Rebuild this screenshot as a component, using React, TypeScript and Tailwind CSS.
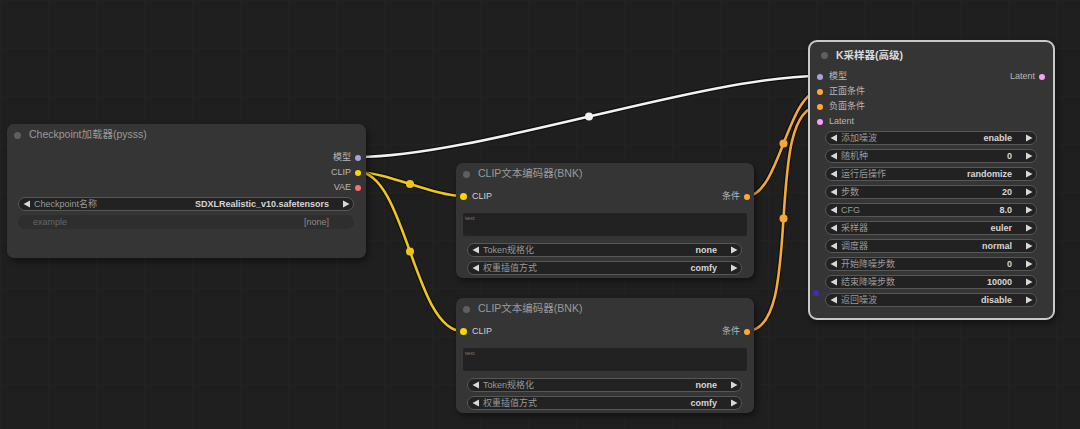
import React from "react";

const FONT = { fontFamily: '"Liberation Sans", Arial, "Noto Sans CJK SC", sans-serif' };

function Arrow({ dir }: { dir: "l" | "r" }) {
  return (
    <svg width="8" height="8" viewBox="0 0 8 8" className="shrink-0">
      {dir === "l" ? <polygon points="7,0.5 7,7.5 0.5,4" fill="#d8d8d8" /> : <polygon points="1,0.5 1,7.5 7.5,4" fill="#d8d8d8" />}
    </svg>
  );
}

function Combo({ label, value, className = "" }: { label: string; value: string; className?: string }) {
  return (
    <div
      className={`h-[14px] rounded-full bg-[#222222] border border-[#575757] flex items-center pl-[4px] pr-[3px] text-[9px] leading-none ${className}`}
    >
      <Arrow dir="l" />
      <span className="ml-[3px] text-[#999999] whitespace-nowrap">{label}</span>
      <span className="ml-auto text-[#d6d6d6] font-bold whitespace-nowrap">{value}</span>
      <span className="ml-[13px] flex"><Arrow dir="r" /></span>
    </div>
  );
}

function Dot({ color, size = 6 }: { color: string; size?: number }) {
  return <span className="rounded-full shrink-0 inline-block" style={{ width: size, height: size, background: color }} />;
}

function OutRow({ label, color, pr }: { label: string; color: string; pr: string }) {
  return (
    <div className={`h-[15px] flex items-center justify-end gap-[4px] text-[9px] text-[#b5b5b5] ${pr}`}>
      <span>{label}</span>
      <Dot color={color} />
    </div>
  );
}

function Title({ text }: { text: string }) {
  return (
    <div className="h-[22px] flex items-center pl-[7px] gap-[8px]">
      <Dot color="#5f5f5f" size={7} />
      <span className="text-[10.5px] whitespace-nowrap text-[#9a9a9a]">{text}</span>
    </div>
  );
}

function ClipNode({ top }: { top: string }) {
  return (
    <div className={`absolute left-[456px] ${top} w-[298px] h-[115px] rounded-[7px] bg-[#353535] shadow-[2px_3px_6px_rgba(0,0,0,0.45)] flex flex-col`}>
      <Title text="CLIP文本编码器(BNK)" />
      <div className="mt-[4px] h-[15px] flex items-center pl-[4px] pr-[4px] text-[9px]">
        <Dot color="#ffd500" size={7} />
        <span className="ml-[5px] text-[#cfcfcf]">CLIP</span>
        <span className="ml-auto text-[#b5b5b5]">条件</span>
        <span className="ml-[4px] flex"><Dot color="#ffa931" /></span>
      </div>
      <div className="mt-[9px] mx-[7px] h-[23px] bg-[#222222] rounded-[2px] pl-[2px] pt-[2px] text-[6px] leading-none text-[#7a7a7a]">text</div>
      <Combo className="mt-[7px] ml-[11px] mr-[12px]" label="Token规格化" value="none" />
      <Combo className="mt-[4px] ml-[11px] mr-[12px]" label="权重插值方式" value="comfy" />
    </div>
  );
}

function Link({ d, color, mid }: { d: string; color: string; mid: [number, number] }) {
  return (
    <g>
      <path d={d} fill="none" stroke="rgba(0,0,0,0.55)" strokeWidth={5} />
      <path d={d} fill="none" stroke={color} strokeWidth={2.6} />
      <circle cx={mid[0]} cy={mid[1]} r={4} fill={color} />
    </g>
  );
}

export default function App() {
  const samplerWidgets: [string, string][] = [
    ["添加噪波", "enable"],
    ["随机种", "0"],
    ["运行后操作", "randomize"],
    ["步数", "20"],
    ["CFG", "8.0"],
    ["采样器", "euler"],
    ["调度器", "normal"],
    ["开始降噪步数", "0"],
    ["结束降噪步数", "10000"],
    ["返回噪波", "disable"],
  ];
  return (
    <div
      style={FONT}
      className="relative w-[1080px] h-[429px] overflow-hidden bg-[#1f1f1f] bg-[linear-gradient(to_right,#222222_1px,transparent_1px),linear-gradient(to_bottom,#222222_1px,transparent_1px)] bg-[size:48px_48px]"
    >
      <svg className="absolute inset-0" width="1080" height="429">
        <Link d="M358,157 C475,157 703,76 820,76" color="#f2f2f2" mid={[589, 116.5]} />
        <Link d="M358,172 C384.7,172 435.3,196 462,196" color="#efc51c" mid={[410, 184]} />
        <Link d="M358,172 C405.5,172 414.5,331 462,331" color="#efc51c" mid={[410, 251.5]} />
        <Link d="M747,196 C779,196 788,91 820,91" color="#f4a83a" mid={[783.5, 143.5]} />
        <Link d="M747,331 C806,331 761,106 820,106" color="#f4a83a" mid={[783.5, 218.5]} />
      </svg>

      {/* Checkpoint loader */}
      <div className="absolute left-[7px] top-[124px] w-[359px] h-[134px] rounded-[7px] bg-[#353535] shadow-[2px_3px_6px_rgba(0,0,0,0.45)] flex flex-col">
        <Title text="Checkpoint加载器(pysss)" />
        <div className="mt-[4px] flex flex-col">
          <OutRow label="模型" color="#a9a0dc" pr="pr-[5px]" />
          <OutRow label="CLIP" color="#ffd500" pr="pr-[5px]" />
          <OutRow label="VAE" color="#ff6e6e" pr="pr-[5px]" />
        </div>
        <Combo className="mt-[2px] ml-[11px] mr-[12px]" label="Checkpoint名称" value="SDXLRealistic_v10.safetensors" />
        <div className="mt-[4px] ml-[11px] mr-[12px] h-[14px] rounded-full bg-[#2e2e2e] flex items-center px-[15px] text-[9px] leading-none">
          <span className="text-[#666666]">example</span>
          <span className="ml-auto text-[#8a8a8a] pr-[10px]">[none]</span>
        </div>
      </div>

      <ClipNode top="top-[163px]" />
      <ClipNode top="top-[298px]" />

      {/* KSampler advanced */}
      <div className="absolute left-[808px] top-[40px] w-[247px] h-[280px] rounded-[9px] bg-[#353535] border-2 border-[#c9c9c9] shadow-[2px_3px_6px_rgba(0,0,0,0.45)] flex flex-col">
        <div className="h-[27px] flex items-center pl-[11px] gap-[8px]">
          <Dot color="#5f5f5f" size={7} />
          <span className="text-[10.5px] whitespace-nowrap text-[#dcdcdc] font-bold">K采样器(高级)</span>
        </div>
        <div className="flex flex-col text-[9px]">
          <div className="h-[15px] flex items-center pl-[7px] pr-[8px]">
            <Dot color="#a9a0dc" />
            <span className="ml-[6px] text-[#b5b5b5]">模型</span>
            <span className="ml-auto text-[#b5b5b5]">Latent</span>
            <span className="ml-[4px] flex"><Dot color="#ff9cf9" /></span>
          </div>
          <div className="h-[15px] flex items-center pl-[7px]">
            <Dot color="#ffa931" />
            <span className="ml-[6px] text-[#b5b5b5]">正面条件</span>
          </div>
          <div className="h-[15px] flex items-center pl-[7px]">
            <Dot color="#ffa931" />
            <span className="ml-[6px] text-[#b5b5b5]">负面条件</span>
          </div>
          <div className="h-[15px] flex items-center pl-[7px]">
            <Dot color="#ff9cf9" />
            <span className="ml-[6px] text-[#b5b5b5]">Latent</span>
          </div>
        </div>
        <div className="mt-[2px] ml-[15px] mr-[16px] flex flex-col gap-[4px]">
          {samplerWidgets.map(([l, v]) => (
            <Combo key={l} label={l} value={v} />
          ))}
        </div>
        <span className="absolute left-[3px] top-[248px] w-[6px] h-[6px] rounded-full bg-[#3a2fb0]" />
      </div>
    </div>
  );
}
